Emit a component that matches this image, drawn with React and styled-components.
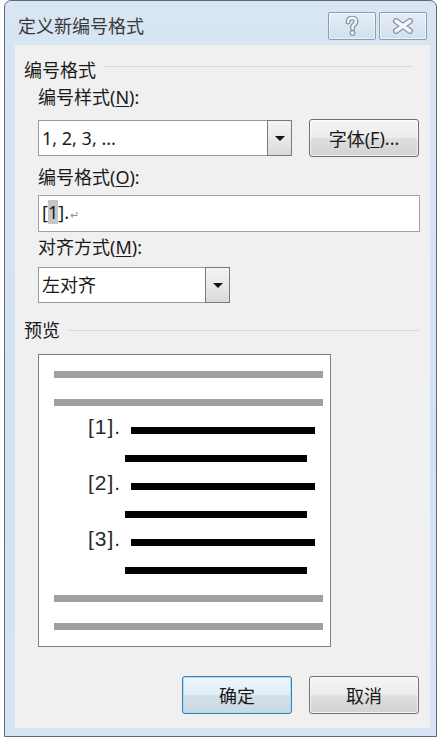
import React from "react";
import styled, { createGlobalStyle } from "styled-components";

const GlobalStyle = createGlobalStyle`
  body {
    margin: 0;
    background: #fff;
    font-family: "Noto Sans", "Noto Sans CJK SC", sans-serif;
    color: #1a1a1a;
  }
`;

const Window = styled.div`
  margin: 0 4px;
  height: 737px;
  box-sizing: border-box;
  border: 1px solid #5f6b79;
  border-radius: 7px 7px 0 0;
  background: linear-gradient(#d8e5f3, #d3e2f2 60%, #d6e4f3);
  display: flex;
  flex-direction: column;
`;

const TitleBar = styled.div`
  height: 44px;
  display: flex;
  align-items: flex-start;
  justify-content: space-between;
  padding: 0 9px 0 13px;
`;

const Title = styled.div`
  margin-top: 13px;
  font-size: 18px;
  line-height: 24px;
  color: #3a3a3a;
`;

const CaptionButtons = styled.div`
  margin-top: 11px;
  display: flex;
  gap: 3px;
`;

const CaptionButton = styled.div`
  width: 48px;
  height: 28px;
  box-sizing: border-box;
  border: 1px solid #8e9cab;
  border-radius: 2px;
  background: linear-gradient(#e6eef7, #dbe6f2 50%, #d2dfee);
  box-shadow: inset 0 0 0 1px rgba(255, 255, 255, 0.6);
  display: flex;
  align-items: center;
  justify-content: center;
`;

const Client = styled.div`
  flex: 1;
  margin: 0 6px 8px 10px;
  background: #f0f0f0;
  display: flex;
  flex-direction: column;
  padding: 0 11px 0 9px;
`;

const GroupHeader = styled.div`
  display: flex;
  align-items: center;
  gap: 8px;
  margin-top: ${(p) => p.top}px;
  height: 24px;
  font-size: 18px;
  line-height: 24px;
  padding-right: ${(p) => p.lineEnd}px;

  &::after {
    content: "";
    flex: 1;
    height: 1px;
    background: #dadada;
    margin-top: ${(p) => p.lineShift}px;
  }
`;

const Label = styled.div`
  margin: ${(p) => p.top}px 0 0 14px;
  height: 24px;
  font-size: 18px;
  line-height: 24px;
  color: #1a1a1a;
`;

const Key = styled.span`
  text-decoration: underline;
  text-underline-offset: 2px;
`;

const Row = styled.div`
  display: flex;
  align-items: center;
  gap: 17px;
  margin: ${(p) => p.top}px 0 0 14px;
`;

const Combo = styled.div`
  width: ${(p) => p.w}px;
  height: 36px;
  box-sizing: border-box;
  border: 1px solid #9a9a9a;
  background: #fff;
  display: flex;
`;

const ComboText = styled.div`
  flex: 1;
  padding-left: 3px;
  font-size: 18px;
  line-height: 34px;
`;

const DropButton = styled.div`
  width: 25px;
  margin: -1px -1px -1px 0;
  box-sizing: border-box;
  border: 1px solid #7a7a7a;
  background: linear-gradient(#f4f4f4, #e9e9e9 50%, #d9d9d9);
  display: flex;
  align-items: center;
  justify-content: center;

  &::before {
    content: "";
    border-left: 5px solid transparent;
    border-right: 5px solid transparent;
    border-top: 5px solid #111;
  }
`;

const TextBox = styled.div`
  margin: 6px 0 0 14px;
  width: 382px;
  height: 37px;
  box-sizing: border-box;
  border: 1px solid #a3a3a3;
  background: #fff;
  padding-left: 3px;
  font-size: 18px;
  line-height: 33px;
`;

const FieldShade = styled.span`
  background: #c6c6c6;
`;

const ParaMark = styled.span`
  font-size: 11px;
  color: #a0889a;
  margin-left: 1px;
`;

const Button = styled.div`
  width: 110px;
  height: 38px;
  box-sizing: border-box;
  border: 1px solid ${(p) => (p.primary ? "#3c7fb1" : "#707070")};
  border-radius: 3px;
  background: ${(p) =>
    p.primary
      ? "linear-gradient(#eef6fb, #e3eef6 48%, #d2e0ea 52%, #c9d9e4)"
      : "linear-gradient(#f5f5f5, #ececec 48%, #dedede 52%, #d2d2d2)"};
  box-shadow: inset 0 0 0 1px
    ${(p) => (p.primary ? "#a8dcf5" : "rgba(255,255,255,0.7)")};
  display: flex;
  align-items: center;
  justify-content: center;
  font-size: 18px;
  color: #1a1a1a;
`;

const Preview = styled.div`
  margin: 12px 0 0 14px;
  width: 293px;
  height: 293px;
  box-sizing: border-box;
  border: 1px solid #7f7f7f;
  background: #fff;
  padding: 5px 0 6px;
  display: flex;
  flex-direction: column;
`;

const PreviewRow = styled.div`
  height: 28px;
  display: flex;
  align-items: center;
  padding-left: ${(p) => p.indent}px;
`;

const Bar = styled.div`
  width: ${(p) => p.w}px;
  height: 7px;
  background: ${(p) => (p.gray ? "#a0a0a0" : "#000")};
`;

const Num = styled.span`
  width: 43px;
  font-family: "Liberation Sans", Arial, sans-serif;
  font-size: 21px;
  letter-spacing: 1px;
  color: #2a2a2a;
  margin-top: -6px;
`;

const Footer = styled.div`
  display: flex;
  justify-content: flex-end;
  gap: 17px;
  margin-top: 29px;
`;

function HelpIcon() {
  return (
    <svg width="16" height="20" viewBox="0 0 16 20">
      <path
        d="M4 6 C4 3 6 2 8 2 C10.5 2 12 3.5 12 5.5 C12 8 9 8.5 8.5 11 L8.5 12.5"
        fill="none"
        stroke="#8a97a5"
        strokeWidth="5"
        strokeLinecap="round"
      />
      <path
        d="M4 6 C4 3 6 2 8 2 C10.5 2 12 3.5 12 5.5 C12 8 9 8.5 8.5 11 L8.5 12.5"
        fill="none"
        stroke="#f4f7fa"
        strokeWidth="2.4"
        strokeLinecap="round"
      />
      <circle cx="8.5" cy="17" r="2.4" fill="#f4f7fa" stroke="#8a97a5" strokeWidth="1.2" />
    </svg>
  );
}

function CloseIcon() {
  return (
    <svg width="22" height="16" viewBox="0 0 22 16">
      <path d="M4 3 L18 13 M18 3 L4 13" stroke="#8a97a5" strokeWidth="6" strokeLinecap="round" />
      <path d="M4 3 L18 13 M18 3 L4 13" stroke="#f4f7fa" strokeWidth="3.4" strokeLinecap="round" />
    </svg>
  );
}

function NumberedItem({ n }) {
  return (
    <>
      <PreviewRow indent={49}>
        <Num>[{n}].</Num>
        <Bar w={184} />
      </PreviewRow>
      <PreviewRow indent={86}>
        <Bar w={182} />
      </PreviewRow>
    </>
  );
}

export default function App() {
  return (
    <>
      <GlobalStyle />
      <Window>
        <TitleBar>
          <Title>定义新编号格式</Title>
          <CaptionButtons>
            <CaptionButton>
              <HelpIcon />
            </CaptionButton>
            <CaptionButton>
              <CloseIcon />
            </CaptionButton>
          </CaptionButtons>
        </TitleBar>
        <Client>
          <GroupHeader top={13} lineEnd={6} lineShift={-8}>
            编号格式
          </GroupHeader>
          <Label top={3}>
            编号样式(<Key>N</Key>):
          </Label>
          <Row top={10}>
            <Combo w={254}>
              <ComboText>1, 2, 3, ...</ComboText>
              <DropButton />
            </Combo>
            <Button>
              字体(<Key>F</Key>)...
            </Button>
          </Row>
          <Label top={8}>
            编号格式(<Key>O</Key>):
          </Label>
          <TextBox>
            [<FieldShade>1</FieldShade>].<ParaMark>↵</ParaMark>
          </TextBox>
          <Label top={3}>
            对齐方式(<Key>M</Key>):
          </Label>
          <Row top={8}>
            <Combo w={192}>
              <ComboText>左对齐</ComboText>
              <DropButton />
            </Combo>
          </Row>
          <GroupHeader top={15} lineEnd={0} lineShift={0}>
            预览
          </GroupHeader>
          <Preview>
            <PreviewRow indent={15}>
              <Bar gray w={269} />
            </PreviewRow>
            <PreviewRow indent={15}>
              <Bar gray w={269} />
            </PreviewRow>
            <NumberedItem n={1} />
            <NumberedItem n={2} />
            <NumberedItem n={3} />
            <PreviewRow indent={15}>
              <Bar gray w={269} />
            </PreviewRow>
            <PreviewRow indent={15}>
              <Bar gray w={269} />
            </PreviewRow>
          </Preview>
          <Footer>
            <Button primary>确定</Button>
            <Button>取消</Button>
          </Footer>
        </Client>
      </Window>
    </>
  );
}
